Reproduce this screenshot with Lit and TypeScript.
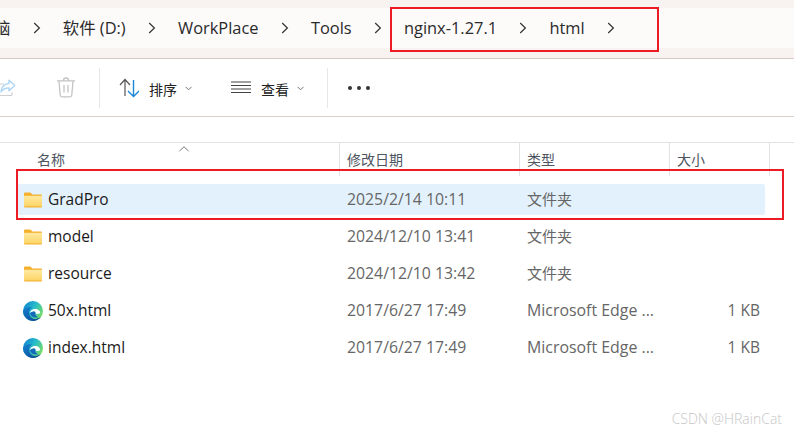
import { LitElement, html, css } from "lit";
import { customElement } from "lit/decorators.js";

const chevron = html`<svg class="crumb-chev" width="8" height="12" viewBox="0 0 8 12"><path d="M1.2 1 L6.4 6 L1.2 11" fill="none" stroke="#333" stroke-width="1.2"/></svg>`;

const small = html`<svg class="caret" width="7" height="5" viewBox="0 0 7 5"><path d="M.5 .8 L3.5 3.8 L6.5 .8" fill="none" stroke="#777" stroke-width="1"/></svg>`;

const folder = html`<svg class="icon" width="20" height="16" viewBox="0 0 20 16">
  <defs><linearGradient id="fg" x1="0" y1="0" x2="0" y2="1"><stop offset="0" stop-color="#ffe9a0"/><stop offset="1" stop-color="#fdd568"/></linearGradient></defs>
  <path d="M1 1.6 a1 1 0 0 1 1-1 h5.4 l2 2 H18 a1 1 0 0 1 1 1 v10.8 a1 1 0 0 1-1 1 H2 a1 1 0 0 1-1-1z" fill="#f5b02e"/>
  <rect x="1" y="3.8" width="18" height="10.6" fill="url(#fg)"/>
</svg>`;

const edge = html`<svg class="icon" width="20" height="20" viewBox="0 0 20 20">
  <defs>
    <linearGradient id="e1" x1="0" y1=".1" x2="1" y2=".7"><stop offset="0" stop-color="#0f7fd0"/><stop offset=".5" stop-color="#27bccb"/><stop offset="1" stop-color="#7ee05e"/></linearGradient>
    <linearGradient id="e2" x1="0" y1="0" x2=".8" y2="1"><stop offset="0" stop-color="#1582d0"/><stop offset="1" stop-color="#0b4d9a"/></linearGradient>
  </defs>
  <circle cx="10" cy="10" r="10" fill="url(#e1)"/>
  <path d="M0 10 C1 7 5 5.6 9 6.6 C6.4 8 5.4 11 6.5 14 C8 18 13 19.5 18.2 15.8 C16.4 18.4 13.4 20 10 20 C4.5 20 0 15.5 0 10z" fill="url(#e2)"/>
  <path d="M7 12.6 C7 9.5 9.5 8 12 8 C15 8 17.2 9.8 17.2 11.6 C17.2 12.6 16 13 14.6 13 C13.4 13 12.6 12.7 12.4 12 C12.5 11.2 11.8 10.6 11 10.6 C9 10.6 7.6 11.5 7 12.6z" fill="#fff"/>
  <path d="M7 12.6 C7.6 11.5 9 10.6 11 10.6 C11.8 10.6 12.5 11.2 12.4 12 C12 13.6 13 15.6 15.4 16 C12 17.4 8.2 16.4 7 12.6z" fill="#1668bb"/>
</svg>`;

const shareIcon = html`<svg width="17" height="18" viewBox="0 0 17 18">
  <path d="M5 5 H1.5 a1 1 0 0 0-1 1 v9.5 a1 1 0 0 0 1 1 H12 a1 1 0 0 0 1-1 v-2" fill="none" stroke="#cfcfcf" stroke-width="1.2"/>
  <path d="M10 1.2 L15.8 6.6 L10 11.8 V8.8 C6.5 8.8 4 10 2 13 C2.4 8.4 5.4 5 10 4.4z" fill="#fff" stroke="#a9d3f5" stroke-width="1.3" stroke-linejoin="round"/>
</svg>`;

const trashIcon = html`<svg width="18" height="21" viewBox="0 0 18 21">
  <path d="M0 3.8 H18 M6.5 3.5 a2.5 2.5 0 0 1 5 0" fill="none" stroke="#c4c4c4" stroke-width="1.3"/>
  <path d="M2 4 L3.2 18 a2 2 0 0 0 2 1.8 h7.6 a2 2 0 0 0 2-1.8 L16 4" fill="none" stroke="#c4c4c4" stroke-width="1.3"/>
  <path d="M7 8 V15.5 M11 8 V15.5" fill="none" stroke="#c4c4c4" stroke-width="1.3"/>
</svg>`;

const sortIcon = html`<svg width="20" height="20" viewBox="0 0 20 20">
  <path d="M1 7 L6 1.5 L11 7 M6 1.5 V18" fill="none" stroke="#555" stroke-width="1.2"/>
  <path d="M9 13 L14.5 18.5 L20 13 M14.5 18.5 V2" fill="none" stroke="#1e88d8" stroke-width="1.4"/>
</svg>`;

const listIcon = html`<svg width="20" height="13" viewBox="0 0 20 13">
  <path d="M0 1 H20 M0 4.5 H20 M0 8 H20 M0 11.5 H20" stroke="#444" stroke-width="1.1"/>
</svg>`;

const rows = [
  { name: "GradPro", date: "2025/2/14 10:11", type: "文件夹", size: "", kind: "folder", selected: true },
  { name: "model", date: "2024/12/10 13:41", type: "文件夹", size: "", kind: "folder" },
  { name: "resource", date: "2024/12/10 13:42", type: "文件夹", size: "", kind: "folder" },
  { name: "50x.html", date: "2017/6/27 17:49", type: "Microsoft Edge ...", size: "1 KB", kind: "edge" },
  { name: "index.html", date: "2017/6/27 17:49", type: "Microsoft Edge ...", size: "1 KB", kind: "edge" },
];

@customElement("app-root")
export class AppRoot extends LitElement {
  static styles = css`
    :host {
      display: block;
      position: relative;
      width: 794px;
      height: 432px;
      overflow: hidden;
      background: #fff;
      font-family: "Open Sans", "Noto Sans CJK SC", sans-serif;
      color: #1f1f1f;
    }
    .addr {
      height: 40px;
      padding: 8px 0 10px;
      background: #f8f2f0;
      border-bottom: 1px solid #d9c9c5;
    }
    .crumbs {
      height: 40px;
      background: #fdfafa;
      display: flex;
      align-items: center;
      gap: 22.2px;
      margin-left: -6px;
      font-size: 16.4px;
      line-height: 40px;
      color: #2a2a2a;
      white-space: nowrap;
    }
    .crumb-chev { flex: none; }
    .toolbar {
      height: 57px;
      border-bottom: 1px solid #dccfcb;
      display: flex;
      align-items: center;
      font-size: 14px;
      color: #222;
    }
    .tool-share { display: flex; margin-left: -1px; width: 58px; }
    .tool-trash { display: flex; width: 42px; }
    .divider { width: 1px; height: 40px; background: #e8e8e8; flex: none; }
    .tool { display: flex; align-items: center; }
    .tool-sort { margin-left: 19px; width: 112px; }
    .tool-view { width: 96px; }
    .tool-sort > span, .tool-view > span { position: relative; top: 1px; }
    .tool svg:first-child { margin-right: 10px; }
    .caret { margin-left: 8px; margin-top: 2px; }
    .dots { display: flex; gap: 5px; margin-left: 20px; }
    .dots i { width: 4px; height: 4px; border-radius: 50%; background: #333; display: block; }

    .head {
      margin-top: 25px;
      height: 33px;
      border-top: 1px solid #e2e2e2;
      display: grid;
      grid-template-columns: 340px 180px 150px 100px;
      font-size: 14px;
      color: #4d5561;
      position: relative;
      line-height: 33px;
    }
    .head div { border-right: 1px solid #e2e2e2; padding-left: 7px; box-sizing: border-box; height: 33px; }
    .head div:first-child { padding-left: 37px; }
    .sort-mark { position: absolute; left: 179px; top: 3px; }

    .list { padding-top: 8px; }
    .row {
      height: 31px;
      margin: 0 29px 6px 18px;
      border-radius: 2px;
      display: grid;
      grid-template-columns: 321px 180px 150px 91px;
      align-items: center;
      font-size: 15.5px;
      line-height: 31px;
      color: #666;
    }
    .row.selected { background: #e3f1fc; }
    .name { display: flex; align-items: center; color: #1a1a1a; }
    .icon-slot { width: 30px; display: flex; padding-left: 5px; box-sizing: border-box; flex: none; }
    .date { padding-left: 8px; font-size: 15.8px; }
    .type { padding-left: 8px; font-size: 15.9px; }
    .type.cjk { font-size: 15px; }
    .size { text-align: right; }

    .mark {
      position: absolute;
      box-sizing: border-box;
      border: 2px solid #ed1c24;
      pointer-events: none;
    }
    .mark.a { left: 390px; top: 7px; width: 269px; height: 45px; }
    .mark.b { left: 16px; top: 169px; width: 768px; height: 51px; }
    .watermark {
      position: absolute;
      right: 12px;
      top: 409px;
      font-size: 14px;
      line-height: 19px;
      color: #c6c6c6;
      font-weight: 300;
      font-family: "Open Sans", sans-serif;
    }
  `;

  render() {
    const crumbs = ["脑", "软件 (D:)", "WorkPlace", "Tools", "nginx-1.27.1", "html"];
    return html`
      <div class="addr">
        <div class="crumbs">
          ${crumbs.map((c) => html`<span>${c}</span>${chevron}`)}
        </div>
      </div>
      <div class="toolbar">
        <span class="tool-share">${shareIcon}</span>
        <span class="tool-trash">${trashIcon}</span>
        <span class="divider"></span>
        <span class="tool tool-sort">${sortIcon}<span>排序</span>${small}</span>
        <span class="tool tool-view">${listIcon}<span>查看</span>${small}</span>
        <span class="divider"></span>
        <span class="dots"><i></i><i></i><i></i></span>
      </div>
      <div class="head">
        <div>名称</div><div>修改日期</div><div>类型</div><div>大小</div>
        <svg class="sort-mark" width="10" height="6" viewBox="0 0 10 6"><path d="M.5 5 L5 .8 L9.5 5" fill="none" stroke="#777" stroke-width="1"/></svg>
      </div>
      <div class="list">
        ${rows.map(
          (r) => html`<div class="row ${r.selected ? "selected" : ""}">
            <div class="name"><span class="icon-slot">${r.kind === "folder" ? folder : edge}</span>${r.name}</div>
            <div class="date">${r.date}</div>
            <div class="type ${r.kind === "folder" ? "cjk" : ""}">${r.type}</div>
            <div class="size">${r.size}</div>
          </div>`
        )}
      </div>
      <div class="mark a"></div>
      <div class="mark b"></div>
      <div class="watermark">CSDN @HRainCat</div>
    `;
  }
}
